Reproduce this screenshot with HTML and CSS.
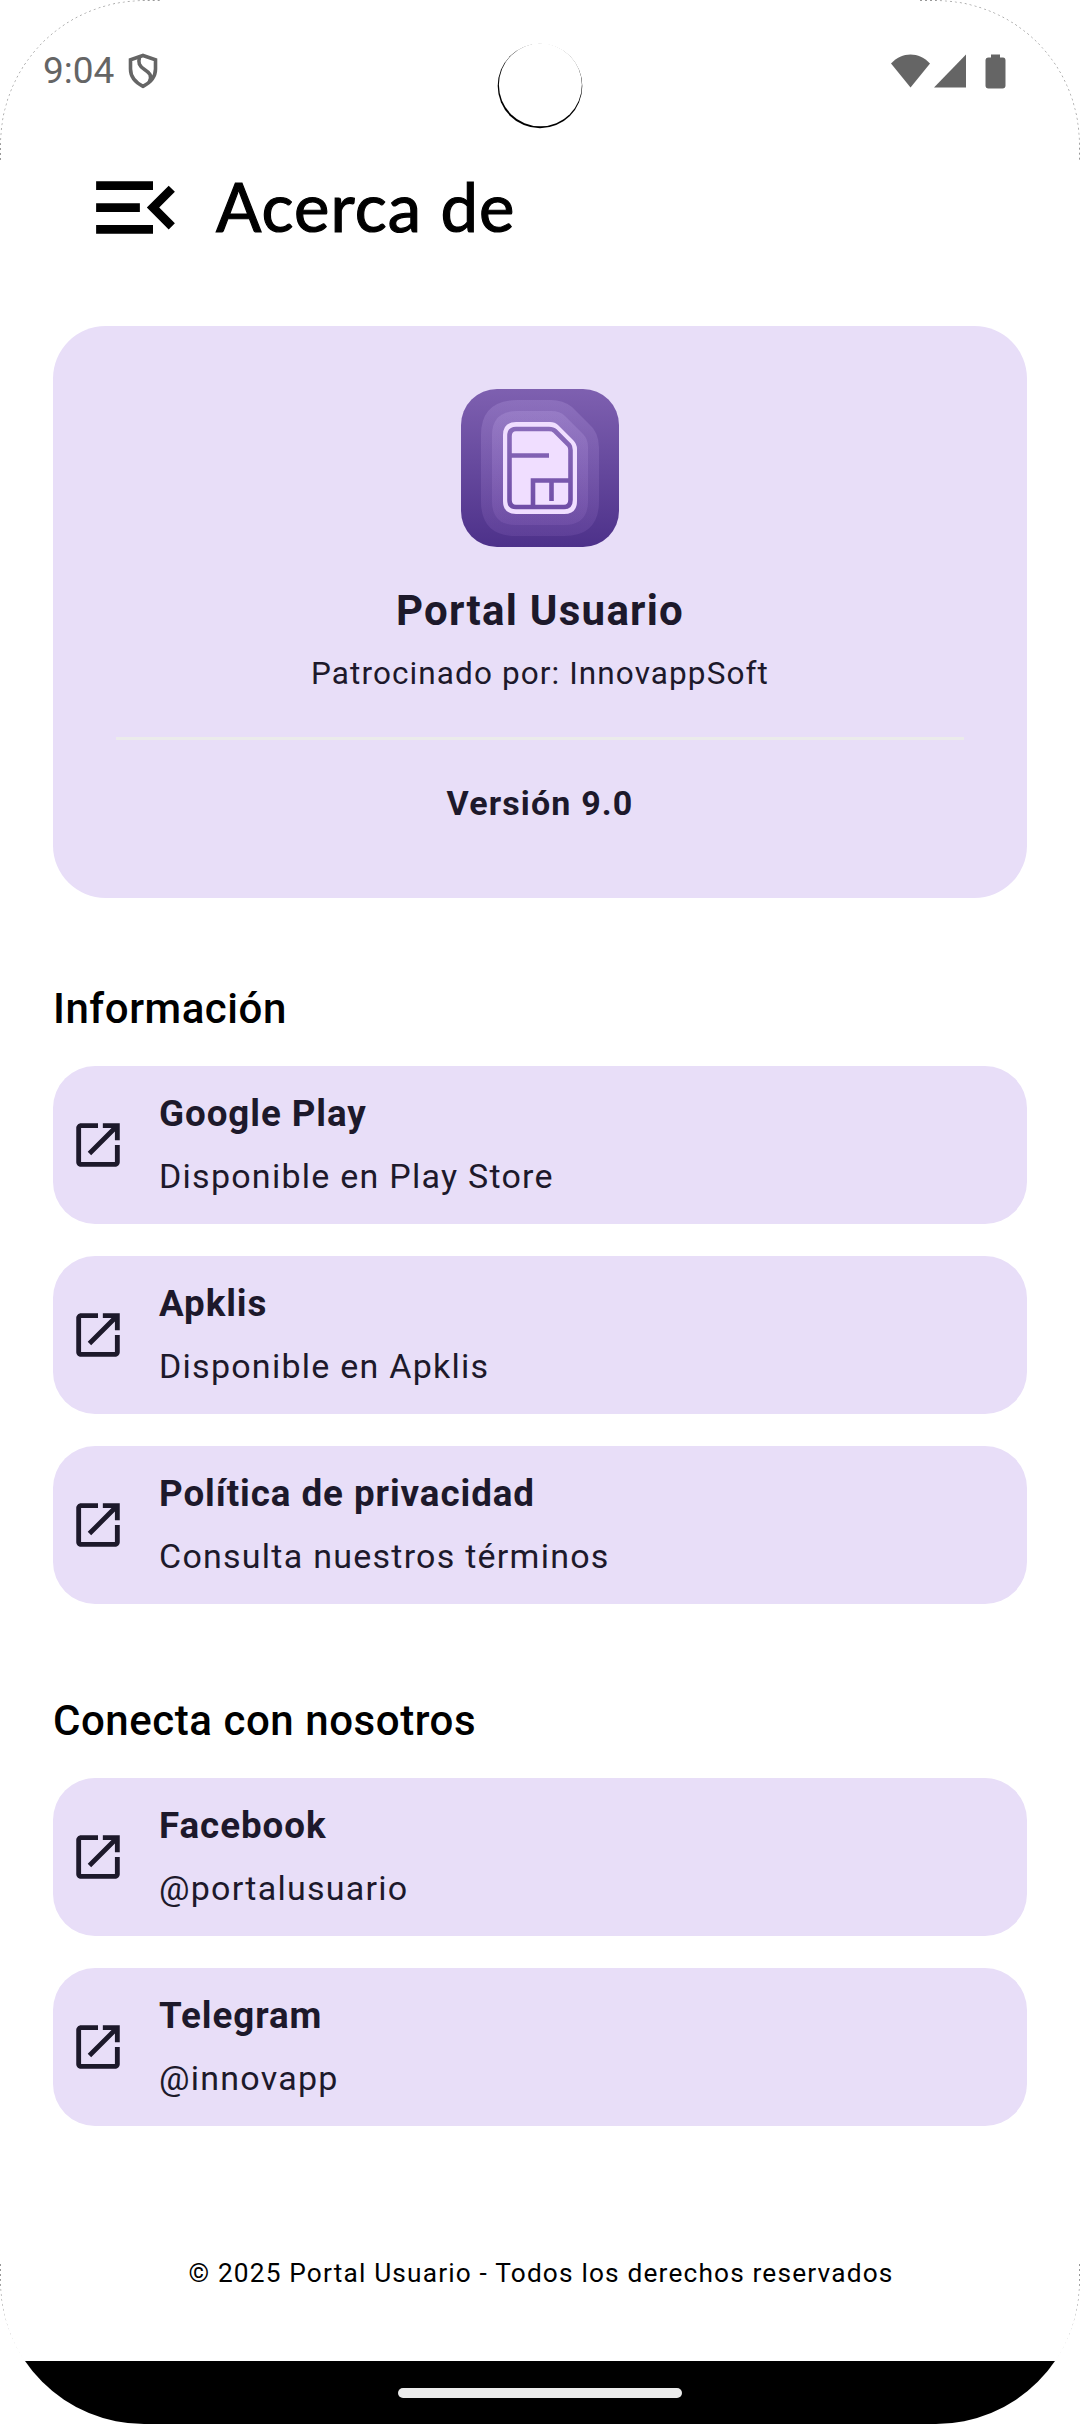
FILE: index.html
```
<!DOCTYPE html>
<html lang="es">

<head>
    <meta charset="UTF-8">
    <meta name="viewport" content="width=device-width, initial-scale=1.0">
    <title>Acerca de</title>
    <link rel="stylesheet" href="styles.css">
</head>

<body>
    <svg class="sprite" width="0" height="0">
        <symbol id="open" viewBox="0 0 24 24">
            <path d="M19 19H5V5h7V3H5c-1.11 0-2 .9-2 2v14c0 1.1.89 2 2 2h14c1.1 0 2-.9 2-2v-7h-2v7zM14 3v2h3.59l-9.83 9.83 1.41 1.41L19 6.41V10h2V3h-7z" />
        </symbol>
    </svg>
    <div class="screen">
        <div class="status">
            <span class="time">9:04</span>
            <svg class="shield" width="30" height="36" viewBox="0 0 30 36">
                <path d="M15 2.500L27.500 6.800V16c0 7.500-5 13.500-12.500 17.300C7.500 29.500 2.500 23.500 2.500 16V6.800z" fill="none" stroke="#666" stroke-width="3.600" />
                <path d="M11.500 4c-1.500 6-.5 9 5 12.500s7.500 6 5 12" fill="none" stroke="#666" stroke-width="3.600" />
            </svg>
            <svg class="signals" width="116" height="36" viewBox="0 0 116 36">
                <path d="M1 10.500C12-1.500 29-1.500 40 10.500L20.500 34.500z" />
                <path d="M44 34.500L76 1.500v33z" />
                <path d="M101 1.500h9v3h3q2.500 0 2.500 3v25q0 3-3 3h-14q-3 0-3-3V7.500q0-3 3-3h2.500z" />
            </svg>
        </div>
        <div class="topbar">
            <svg class="menu" width="105" height="105" viewBox="0 0 24 24">
                <path d="M3 18h13v-2H3v2zm0-5h10v-2H3v2zm0-7v2h13V6H3zm18 9.590L17.420 12 21 8.410 19.590 7l-5 5 5 5L21 15.590z" />
            </svg>
            <h1>Acerca de</h1>
        </div>
        <div class="about">
            <svg class="logo" width="158" height="158" viewBox="0 0 158 158">
                <defs>
                    <linearGradient id="bg" x1="0" y1="0" x2="0" y2="1">
                        <stop offset="0" stop-color="#7e60b0" />
                        <stop offset="1" stop-color="#4d318a" />
                    </linearGradient>
                    <linearGradient id="lines" gradientUnits="userSpaceOnUse" x1="0" y1="38" x2="0" y2="120">
                        <stop offset="0" stop-color="#8a6bba" />
                        <stop offset="1" stop-color="#6f4da6" />
                    </linearGradient>
                    <linearGradient id="halo" x1="0" y1="0" x2="0" y2="1">
                        <stop offset="0" stop-color="#d9c4ff" stop-opacity=".18" />
                        <stop offset="1" stop-color="#d9a8ff" stop-opacity=".1" />
                    </linearGradient>
                </defs>
                <rect width="158" height="158" rx="36" fill="url(#bg)" />
                <path d="M57 11H90Q102 11 111 18L127 34Q138 43 138 59V112Q138 147 103 147H55Q20 147 20 112V46Q20 11 57 11z" fill="url(#halo)" />
                <path d="M57 22H90Q99 22 104 27L122 45Q127 50 127 59V112Q127 136 103 136H55Q31 136 31 112V46Q31 22 57 22z" fill="url(#halo)" />
                <path d="M55 33H89Q94 33 97 36L112 51Q116 55 116 60V112Q116 125 103 125H55Q42 125 42 112V46Q42 33 55 33z" fill="#f0deff" />
                <path d="M55 40H88Q92 40 94 42L108 56Q109.500 58 109.500 61V111Q109.500 118 103 118H55Q48.500 118 48.500 111V47Q48.500 40 55 40zM48.500 66.500H88M72 118V91.500H109.500M90.500 91.500V112" fill="none" stroke="url(#lines)" stroke-width="4.600" />
            </svg>
            <h2>Portal Usuario</h2>
            <p class="sponsor">Patrocinado por: InnovappSoft</p>
            <hr>
            <p class="version">Versión 9.0</p>
        </div>

        <h3>Información</h3>
        <div class="list">
            <a class="item">
                <svg><use href="#open" /></svg>
                <div><b>Google Play</b><span>Disponible en Play Store</span></div>
            </a>
            <a class="item">
                <svg><use href="#open" /></svg>
                <div><b>Apklis</b><span>Disponible en Apklis</span></div>
            </a>
            <a class="item">
                <svg><use href="#open" /></svg>
                <div><b>Política de privacidad</b><span>Consulta nuestros términos</span></div>
            </a>
        </div>

        <h3 class="social">Conecta con nosotros</h3>
        <div class="list">
            <a class="item">
                <svg><use href="#open" /></svg>
                <div><b>Facebook</b><span>@portalusuario</span></div>
            </a>
            <a class="item">
                <svg><use href="#open" /></svg>
                <div><b>Telegram</b><span>@innovapp</span></div>
            </a>
        </div>

        <p class="footer">© 2025 Portal Usuario - Todos los derechos reservados</p>
        <div class="navbar"><i></i></div>

        <svg class="camera" width="86" height="86" viewBox="0 0 86 86">
            <circle cx="43" cy="43" r="42.300" />
            <circle cx="43.400" cy="41.800" r="41.500" fill="#fff" />
        </svg>
        <!-- rounded corners of the display -->
        <svg class="edge" width="1080" height="2424" viewBox="0 0 1080 2424">
            <path d="M.5 160V144A143.500 143.500 0 0 1 144 .5H160M920 .5H936A143.500 143.500 0 0 1 1079.500 144V160M.5 2264V2280A143.500 143.500 0 0 0 24 2361M1079.500 2264V2280A143.500 143.500 0 0 1 1056 2361" />
        </svg>
    </div>
</body>

</html>
```
FILE: styles.css
```
* {
    box-sizing: border-box;
    margin: 0;
    padding: 0;
}

body {
    background: #fff;
    font-family: Roboto, "Noto Sans", sans-serif;
    color: #1d192b;
}

.sprite {
    position: absolute;
}

.screen {
    position: relative;
    display: flex;
    flex-direction: column;
    width: 1080px;
    height: 2424px;
    overflow: hidden;
    border-radius: 144px;
}

.status {
    display: flex;
    align-items: center;
    height: 142px;
    padding: 0 74px 0 43px;
    color: #666;
    fill: #666;
}

.time {
    padding-bottom: 2px;
    font-size: 37px;
}

.shield {
    margin-left: 14px;
}

.signals {
    margin-left: auto;
}

.topbar {
    display: flex;
    align-items: center;
    height: 131px;
    padding-left: 83px;
    color: #000;
}

h1 {
    margin-left: 28px;
    padding-bottom: 4px;
    font: 400 67px/80px Lato, sans-serif;
    letter-spacing: 1.1px;
    -webkit-text-stroke: 1.2px #000;
}

.about {
    display: flex;
    flex-direction: column;
    align-items: center;
    height: 572px;
    margin: 53px 53px 0;
    padding: 63px 63px 0;
    border-radius: 52.5px;
    background: #e8def8;
}

h2 {
    margin-top: 32px;
    font-size: 42px;
    line-height: 64px;
    letter-spacing: 1.25px;
}

.sponsor {
    font-size: 31.5px;
    line-height: 62px;
    letter-spacing: 1.1px;
}

hr {
    width: 100%;
    height: 3px;
    margin: 32px 0 33px;
    border: 0;
    background: #ebebeb;
}

.version {
    font-size: 34px;
    font-weight: bold;
    line-height: 60px;
    letter-spacing: 1.15px;
}

h3 {
    margin: 78px 53px 24px;
    color: #000;
    font-size: 42px;
    font-weight: 500;
    line-height: 66px;
    letter-spacing: .55px;
}

.social {
    margin-top: 84px;
}

.list {
    display: flex;
    flex-direction: column;
    gap: 32px;
    padding: 0 53px;
}

.item {
    display: flex;
    align-items: center;
    gap: 32px;
    height: 158px;
    padding-left: 16px;
    border-radius: 42px;
    background: #e8def8;
}

.item svg {
    width: 58px;
    height: 58px;
    fill: #1d192b;
}

.item div {
    display: flex;
    flex-direction: column;
}

.item b {
    font-size: 36.75px;
    line-height: 63px;
    letter-spacing: .93px;
}

.item span {
    font-size: 34px;
    line-height: 63px;
    letter-spacing: 1.25px;
}

.footer {
    margin-top: 116px;
    padding-left: 2px;
    color: #000;
    font-size: 26.25px;
    line-height: 63px;
    letter-spacing: 1.17px;
    text-align: center;
}

.navbar {
    display: flex;
    justify-content: center;
    align-items: center;
    height: 63px;
    margin-top: auto;
    background: #000;
}

.navbar i {
    width: 284px;
    height: 10px;
    border-radius: 5px;
    background: #ebebeb;
}

.camera {
    position: absolute;
    left: 497px;
    top: 43px;
}

.edge {
    position: absolute;
    left: 0;
    top: 0;
    fill: none;
    stroke: #000;
    stroke-width: .5px;
    stroke-dasharray: 2 3;
    opacity: .8;
}
```
